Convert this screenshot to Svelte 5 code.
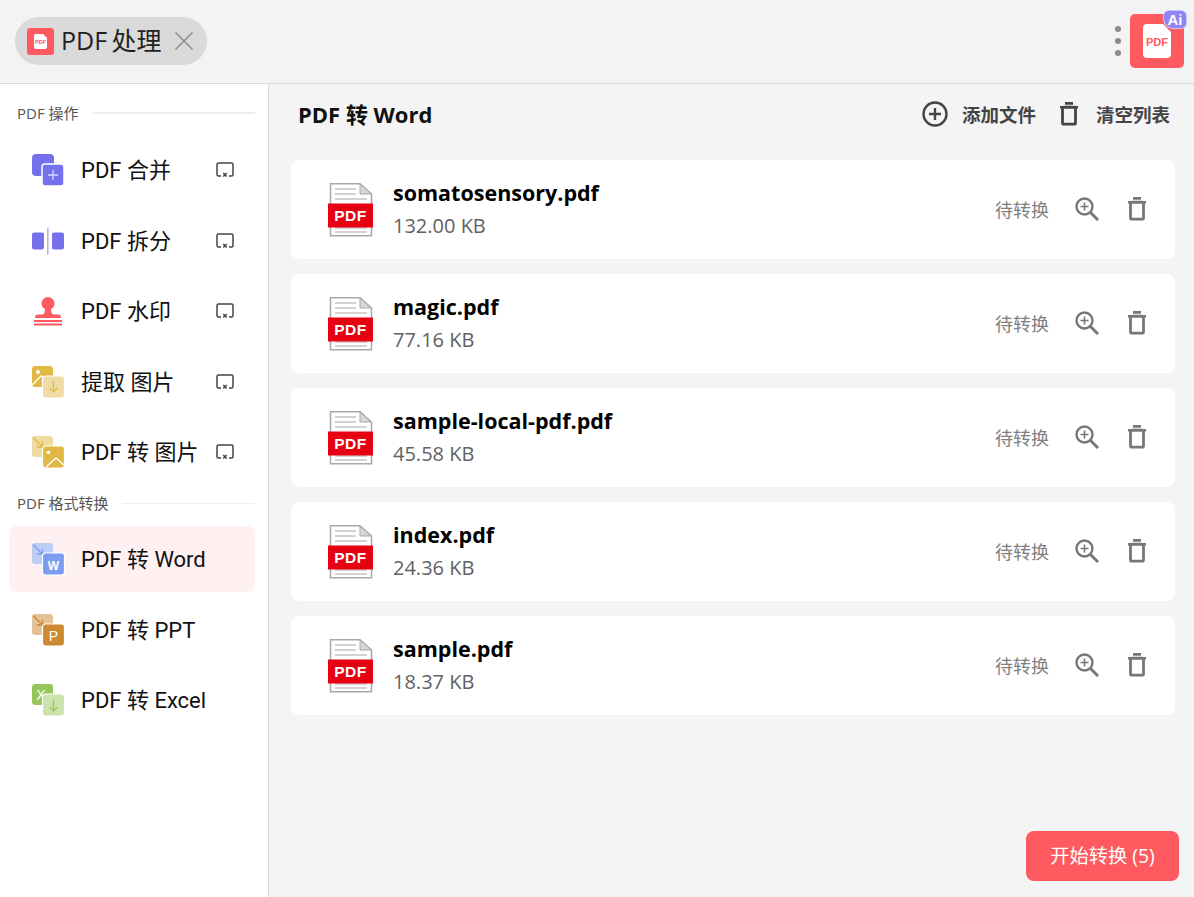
<script>
  const groupOne = [
    { key: 'merge', label: 'PDF 合并' },
    { key: 'split', label: 'PDF 拆分' },
    { key: 'stamp', label: 'PDF 水印' },
    { key: 'extract', label: '提取 图片' },
    { key: 'toimg', label: 'PDF 转 图片' }
  ];
  const groupTwo = [
    { key: 'word', label: 'PDF 转 Word', active: true },
    { key: 'ppt', label: 'PDF 转 PPT' },
    { key: 'excel', label: 'PDF 转 Excel' }
  ];
  const files = [
    { name: 'somatosensory.pdf', size: '132.00 KB' },
    { name: 'magic.pdf', size: '77.16 KB' },
    { name: 'sample-local-pdf.pdf', size: '45.58 KB' },
    { name: 'index.pdf', size: '24.36 KB' },
    { name: 'sample.pdf', size: '18.37 KB' }
  ];
</script>

{#snippet arrow(c)}
  <path d="M2 2.500 L11.500 12 M11.500 6.500 V12 H6" fill="none" stroke={c} stroke-width="1.300" />
{/snippet}

{#snippet navIcon(key)}
  <svg class="nav-icon" width="34" height="34" viewBox="0 0 34 34">
    {#if key === 'merge'}
      <rect x="1" y="1" width="22" height="22" rx="4" fill="#7570ec" />
      <rect x="11" y="11" width="22" height="22" rx="3" fill="#7570ec" stroke="#fff" stroke-width="1.500" />
      <path d="M22 17 V27 M17 22 H27" stroke="#d8d6fa" stroke-width="1.300" />
    {:else if key === 'split'}
      <rect x="1" y="8.500" width="12" height="17" rx="2" fill="#7570ec" />
      <rect x="21" y="8.500" width="12" height="17" rx="2" fill="#7570ec" />
      <rect x="16" y="3.500" width="1.600" height="27" fill="#b3b0f5" />
    {:else if key === 'stamp'}
      <circle cx="17" cy="9.500" r="6.500" fill="#ff5a5f" />
      <path d="M14.500 13 H19.500 L20.500 18.500 C21 20 22 20.500 23 20.500 H27 C29 20.500 30 21.500 30 24 H4 C4 21.500 5 20.500 7 20.500 H11 C12 20.500 13 20 13.500 18.500 Z" fill="#ff5a5f" />
      <rect x="3" y="26" width="28" height="2" fill="#ff5a5f" />
      <rect x="3" y="29.500" width="28" height="2" fill="#ff5a5f" />
    {:else if key === 'extract'}
      <rect x="1" y="1" width="21" height="21" rx="3" fill="#e1b845" />
      <circle cx="7" cy="7" r="2" fill="#fff" />
      <path d="M1 20 L10 11 L16 17" fill="none" stroke="#fff" stroke-width="1.300" />
      <rect x="11.500" y="11" width="22" height="22" rx="3" fill="#eedca3" stroke="#fff" stroke-width="1.200" />
      <path d="M22.500 16 V27 M18.500 23 L22.500 27 L26.500 23" fill="none" stroke="#e1b845" stroke-width="1.200" />
    {:else if key === 'toimg'}
      <rect x="1" y="1" width="21" height="21" rx="3" fill="#eedca3" />
      {@render arrow('#e1b845')}
      <rect x="11.500" y="11" width="22" height="22" rx="3" fill="#e1b845" stroke="#fff" stroke-width="1.200" />
      <circle cx="17.500" cy="17.500" r="1.800" fill="#fff" />
      <path d="M15 32 L25 23 L33 30" fill="none" stroke="#fff" stroke-width="1.300" />
    {:else if key === 'word'}
      <rect x="1" y="1" width="21" height="21" rx="3" fill="#bdcdf6" />
      {@render arrow('#7b9df0')}
      <rect x="11.500" y="11" width="22" height="22" rx="3" fill="#7b9df0" stroke="#fff" stroke-width="1.200" />
      <text x="22.500" y="27.500" class="icon-letter small">W</text>
    {:else if key === 'ppt'}
      <rect x="1" y="1" width="21" height="21" rx="3" fill="#e5c196" />
      {@render arrow('#cd8832')}
      <rect x="11.500" y="11" width="22" height="22" rx="3" fill="#cd8832" stroke="#fff" stroke-width="1.200" />
      <text x="22.500" y="28" class="icon-letter">P</text>
    {:else}
      <rect x="1" y="1" width="21" height="21" rx="3" fill="#96c65a" />
      <text x="10" y="17" class="icon-letter">X</text>
      <rect x="11.500" y="11" width="22" height="22" rx="3" fill="#cbe3ad" stroke="#fff" stroke-width="1.200" />
      <path d="M22.500 17 V28 M18.500 24 L22.500 28 L26.500 24" fill="none" stroke="#96c65a" stroke-width="1.200" />
    {/if}
  </svg>
{/snippet}

{#snippet popout()}
  <svg class="popout" width="18" height="16" viewBox="0 0 18 16">
    <path d="M5 14 H2.500 Q1 14 1 12.500 V2.500 Q1 1 2.500 1 H15.500 Q17 1 17 2.500 V12.500 Q17 14 15.500 14 H13" fill="none" stroke="#444" stroke-width="1.500" />
    <path d="M7.300 11 L10.700 14.600 M10.700 11 L7.300 14.600" stroke="#444" stroke-width="1.500" />
  </svg>
{/snippet}

{#snippet navItem(item)}
  <div class="nav-item" class:active={item.active}>
    {@render navIcon(item.key)}
    <span class="nav-label">{item.label}</span>
    {#if groupOne.includes(item)}
      {@render popout()}
    {/if}
  </div>
{/snippet}

{#snippet trash(color)}
  <svg width="18" height="24" viewBox="0 0 18 24">
    <path d="M5 1.400 H13 M0 5.200 H18" fill="none" stroke={color} stroke-width="2.600" />
    <rect x="2.500" y="5.200" width="13" height="17" rx="1.500" fill="none" stroke={color} stroke-width="2.800" />
  </svg>
{/snippet}

{#snippet pdfFile()}
  <svg width="46" height="54" viewBox="0 0 46 54">
    <path d="M2.500 0.800 H32 L43.500 11 V52.800 H2.500 Z" fill="#fff" stroke="#a8a8a8" stroke-width="1.500" />
    <path d="M32 1 V11 H43 Z" fill="#d8d8d8" stroke="#a8a8a8" stroke-width="1" />
    <path d="M7 6 H28 M7 11 H28 M7 16 H39 M7 45 H39 M7 49 H39" stroke="#c4c4c4" stroke-width="1.300" />
    <rect x="0" y="20.500" width="45" height="24" fill="#e60012" />
    <text x="22.500" y="37.500" class="pdf-mark">PDF</text>
  </svg>
{/snippet}

<div class="app">
  <header class="topbar">
    <div class="tab">
      <span class="tab-logo">
        <svg width="27" height="27" viewBox="0 0 27 27">
          <rect width="27" height="27" rx="3" fill="#ff5a5f" />
          <path d="M7 8 Q7 6 9 6 H16 L20 10 V19 Q20 21 18 21 H9 Q7 21 7 19 Z" fill="#fff" />
          <text x="13.500" y="16" class="logo-mark tiny">PDF</text>
        </svg>
      </span>
      <span class="tab-title">PDF 处理</span>
      <svg class="tab-close" width="20" height="20" viewBox="0 0 20 20">
        <path d="M1.500 1.500 L18.500 18.500 M18.500 1.500 L1.500 18.500" stroke="#8a8a8a" stroke-width="1.500" />
      </svg>
    </div>
    <div class="top-right">
      <div class="dots"><i></i><i></i><i></i></div>
      <div class="app-logo">
        <svg width="54" height="54" viewBox="0 0 54 54">
          <rect width="54" height="54" rx="5" fill="#ff5a5f" />
          <path d="M13 14 Q13 10 17 10 H33 L41 18 V40 Q41 44 37 44 H17 Q13 44 13 40 Z" fill="#fff" />
          <text x="27" y="32" class="logo-mark">PDF</text>
        </svg>
        <span class="ai-badge">Ai</span>
      </div>
    </div>
  </header>

  <div class="body">
    <aside class="sidebar">
      <div class="section-head first"><span>PDF 操作</span><em></em></div>
      {#each groupOne as item}
        {@render navItem(item)}
      {/each}
      <div class="section-head"><span>PDF 格式转换</span><em></em></div>
      {#each groupTwo as item}
        {@render navItem(item)}
      {/each}
    </aside>

    <main class="main">
      <div class="main-head">
        <h1>PDF 转 Word</h1>
        <div class="actions">
          <span class="action add">
            <svg width="26" height="26" viewBox="0 0 26 26">
              <circle cx="13" cy="13" r="11.500" fill="none" stroke="#444" stroke-width="2.400" />
              <path d="M13 7 V19 M7 13 H19" stroke="#444" stroke-width="2.400" />
            </svg>
            添加文件
          </span>
          <span class="action">
            {@render trash('#444')}
            清空列表
          </span>
        </div>
      </div>

      <div class="file-list">
        {#each files as f}
          <div class="file-card">
            <div class="file-icon">{@render pdfFile()}</div>
            <div class="file-info">
              <div class="file-name">{f.name}</div>
              <div class="file-size">{f.size}</div>
            </div>
            <span class="file-status">待转换</span>
            <svg class="zoom-btn" width="24" height="24" viewBox="0 0 24 24">
              <circle cx="9.500" cy="9.500" r="8" fill="none" stroke="#777" stroke-width="2.400" />
              <path d="M9.500 5.500 V13.500 M5.500 9.500 H13.500" stroke="#777" stroke-width="1.600" />
              <path d="M15.500 15.500 L23 23" stroke="#777" stroke-width="3" />
            </svg>
            <span class="del-btn">{@render trash('#777')}</span>
          </div>
        {/each}
      </div>

      <div class="footer">
        <button class="start-btn">开始转换 (5)</button>
      </div>
    </main>
  </div>
</div>

<style>
  :global(body) {
    margin: 0;
  }

  .app {
    width: 1194px;
    height: 897px;
    display: flex;
    flex-direction: column;
    overflow: hidden;
    background: #f4f4f4;
    font-family: "Open Sans", "Noto Sans CJK SC", sans-serif;
    color: #111;
  }

  .topbar {
    height: 83px;
    flex-shrink: 0;
    box-sizing: border-box;
    display: flex;
    align-items: center;
    justify-content: space-between;
    padding: 0 10px 0 15px;
    background: #f3f3f3;
  }

  .tab {
    display: flex;
    align-items: center;
    height: 48px;
    width: 192px;
    box-sizing: border-box;
    padding-left: 12px;
    margin-top: -1px;
    border-radius: 24px;
    background: #dadada;
  }

  .tab-logo {
    display: flex;
    width: 27px;
  }

  .tab-title {
    margin-left: 7px;
    padding-bottom: 4px;
    font-size: 25px;
    word-spacing: -2px;
    color: #222;
    white-space: nowrap;
  }

  .tab-close {
    margin-left: 12px;
  }

  .top-right {
    display: flex;
    align-items: center;
    gap: 9px;
    margin-top: -1px;
  }

  .dots {
    display: flex;
    flex-direction: column;
    gap: 6px;
  }

  .dots i {
    display: block;
    width: 6px;
    height: 6px;
    border-radius: 50%;
    background: #8a8a8a;
  }

  .app-logo {
    position: relative;
    display: flex;
  }

  .ai-badge {
    position: absolute;
    top: -3px;
    right: -2px;
    width: 22px;
    height: 17px;
    line-height: 17px;
    text-align: center;
    border-radius: 5px 5px 5px 9px;
    background: #8f84f2;
    box-shadow: 0 0 0 1px #c9c4fa;
    color: #fff;
    font-family: "Liberation Sans", sans-serif;
    font-size: 15px;
    font-weight: 700;
  }

  .logo-mark {
    font-family: "Liberation Sans", sans-serif;
    font-size: 11px;
    font-weight: 700;
    fill: #ff5a5f;
    text-anchor: middle;
  }

  .logo-mark.tiny {
    font-size: 5.500px;
  }

  .body {
    flex: 1;
    display: flex;
    min-height: 0;
    border-top: 1px solid #d9d9d9;
  }

  .sidebar {
    width: 269px;
    flex-shrink: 0;
    box-sizing: border-box;
    padding: 0 13px 0 9px;
    background: #fff;
    border-right: 1px solid #d9d9d9;
  }

  .section-head {
    display: flex;
    align-items: center;
    gap: 13px;
    height: 20px;
    margin: 8px 0 13px;
    padding-left: 8px;
    font-size: 15px;
    color: #555;
    white-space: nowrap;
  }

  .section-head span {
    padding-bottom: 2px;
  }

  .section-head.first {
    margin-top: 19px;
    margin-bottom: 14px;
  }

  .section-head em {
    flex: 1;
    height: 2px;
    background: #eee;
  }

  .section-head:not(.first) em {
    height: 1px;
  }

  .nav-item {
    display: flex;
    align-items: center;
    height: 66px;
    margin-bottom: 4.500px;
    padding-left: 22px;
    padding-right: 21px;
    border-radius: 8px;
    box-sizing: border-box;
  }

  .nav-item.active {
    background: #fff1f1;
  }

  .nav-icon {
    flex-shrink: 0;
  }

  .nav-label {
    flex: 1;
    margin-left: 16px;
    padding-bottom: 4px;
    font-family: Roboto, "Noto Sans CJK SC", sans-serif;
    font-size: 22px;
    color: #111;
    white-space: nowrap;
  }

  .popout {
    flex-shrink: 0;
  }

  .icon-letter {
    font-family: "Liberation Sans", sans-serif;
    font-size: 14px;
    fill: #fff;
    text-anchor: middle;
  }

  .icon-letter.small {
    font-size: 12px;
    font-weight: 700;
  }

  .main {
    flex: 1;
    min-width: 0;
    display: flex;
    flex-direction: column;
    padding: 0 19px 16px 22px;
  }

  .main-head {
    height: 60px;
    display: flex;
    align-items: center;
    justify-content: space-between;
    padding: 0 5px 0 8px;
  }

  .main-head h1 {
    margin: 0 0 0 -1px;
    padding-bottom: 2px;
    font-size: 22px;
    font-weight: 700;
    color: #111;
  }

  .actions {
    display: flex;
    align-items: center;
    gap: 24px;
  }

  .action {
    display: flex;
    align-items: center;
    gap: 18px;
    font-size: 18.500px;
    font-weight: 700;
    color: #444;
  }

  .action.add {
    gap: 14px;
  }

  .file-list {
    display: flex;
    flex-direction: column;
    gap: 15px;
    margin-top: 16px;
  }

  .file-card {
    height: 99px;
    box-sizing: border-box;
    display: flex;
    align-items: center;
    padding: 0 29px 0 37px;
    border-radius: 8px;
    background: #fff;
  }

  .file-icon {
    display: flex;
    width: 47px;
  }

  .pdf-mark {
    font-family: "Liberation Sans", sans-serif;
    font-size: 15.500px;
    font-weight: 700;
    letter-spacing: 0.5px;
    fill: #fff;
    text-anchor: middle;
  }

  .file-info {
    flex: 1;
    margin-left: 18px;
    padding-bottom: 3px;
  }

  .file-name {
    font-size: 21.500px;
    font-weight: 700;
    line-height: 30px;
    color: #000;
  }

  .file-size {
    margin-top: 5px;
    font-size: 20px;
    line-height: 26px;
    color: #606266;
  }

  .file-status {
    padding-bottom: 1px;
    margin-right: 1px;
    font-size: 18px;
    color: #808080;
  }

  .zoom-btn {
    margin-left: 25px;
    margin-bottom: 2px;
  }

  .del-btn {
    display: flex;
    margin-left: 29px;
    margin-bottom: 1px;
  }

  .footer {
    margin-top: auto;
    display: flex;
    justify-content: flex-end;
  }

  .start-btn {
    width: 153px;
    height: 50px;
    margin-right: -4px;
    border: none;
    border-radius: 8px;
    background: #ff5a5f;
    color: #fff;
    font: inherit;
    font-size: 19.300px;
    padding: 0 0 2px;
  }
</style>
